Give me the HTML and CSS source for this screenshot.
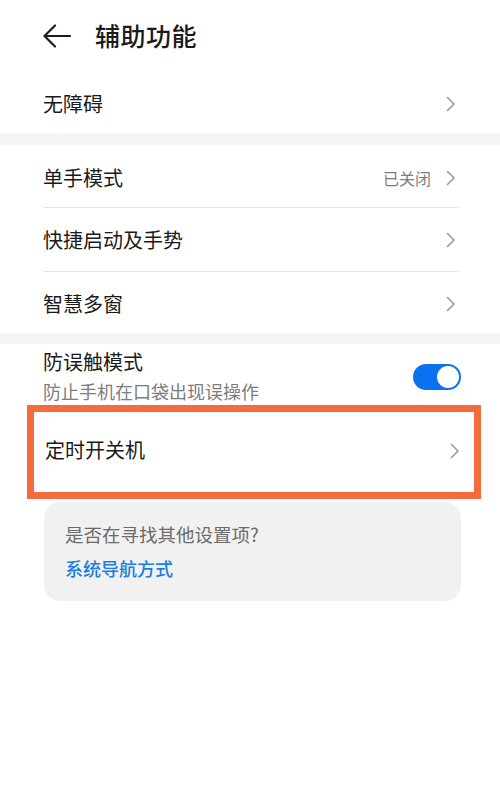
FILE: index.html
```html
<!DOCTYPE html>
<html lang="zh-CN">
<head>
<meta charset="utf-8">
<title>辅助功能</title>
<link rel="stylesheet" href="styles.css">
</head>
<body>
<div class="page">
  <header class="header">
    <svg class="back" width="28" height="24" viewBox="0 0 28 24">
      <path d="M27 12 H2 M12 1.5 L1.5 12 L12 22.5" fill="none" stroke="#1c1c1c" stroke-width="2.2" stroke-linecap="round" stroke-linejoin="round"/>
    </svg>
    <h1 class="title">辅助功能</h1>
  </header>

  <section class="group">
    <div class="row row-a">
      <span class="label">无障碍</span>
      <svg class="chev" width="10" height="16" viewBox="0 0 10 16"><path d="M1.5 1.5 L8 8 L1.5 14.5" fill="none" stroke="#9a9a9a" stroke-width="1.6" stroke-linecap="round" stroke-linejoin="round"/></svg>
    </div>
  </section>

  <div class="band"></div>

  <section class="group">
    <div class="row row-b divided">
      <span class="label">单手模式</span>
      <span class="right"><span class="value">已关闭</span>
      <svg class="chev" width="10" height="16" viewBox="0 0 10 16"><path d="M1.5 1.5 L8 8 L1.5 14.5" fill="none" stroke="#9a9a9a" stroke-width="1.6" stroke-linecap="round" stroke-linejoin="round"/></svg></span>
    </div>
    <div class="row row-c divided">
      <span class="label">快捷启动及手势</span>
      <svg class="chev" width="10" height="16" viewBox="0 0 10 16"><path d="M1.5 1.5 L8 8 L1.5 14.5" fill="none" stroke="#9a9a9a" stroke-width="1.6" stroke-linecap="round" stroke-linejoin="round"/></svg>
    </div>
    <div class="row row-d">
      <span class="label">智慧多窗</span>
      <svg class="chev" width="10" height="16" viewBox="0 0 10 16"><path d="M1.5 1.5 L8 8 L1.5 14.5" fill="none" stroke="#9a9a9a" stroke-width="1.6" stroke-linecap="round" stroke-linejoin="round"/></svg>
    </div>
  </section>

  <div class="band band-b"></div>

  <section class="group">
    <div class="row row-toggle">
      <div class="stack">
        <span class="label">防误触模式</span>
        <span class="sub">防止手机在口袋出现误操作</span>
      </div>
      <span class="toggle"><span class="knob"></span></span>
    </div>
    <div class="row row-timer highlighted">
      <span class="label">定时开关机</span>
      <svg class="chev" width="10" height="16" viewBox="0 0 10 16"><path d="M1.5 1.5 L8 8 L1.5 14.5" fill="none" stroke="#9a9a9a" stroke-width="1.6" stroke-linecap="round" stroke-linejoin="round"/></svg>
    </div>
  </section>

  <div class="card">
    <div class="card-q">是否在寻找其他设置项?</div>
    <div class="card-link">系统导航方式</div>
  </div>
</div>
</body>
</html>
```

FILE: styles.css
```css
* { box-sizing: border-box; }
html, body {
  margin: 0;
  padding: 0;
  background: #ffffff;
}
body {
  font-family: "Noto Sans CJK SC", "Noto Sans", sans-serif;
  color: #1a1a1a;
  width: 500px;
  height: 786px;
  overflow: hidden;
}
.page {
  display: flex;
  flex-direction: column;
}
.header {
  height: 74px;
  display: flex;
  align-items: center;
  padding-left: 43px;
  padding-bottom: 4px;
}
.back {
  display: block;
  margin-top: 1px;
}
.title {
  margin: 0 0 0 24px;
  font-size: 25px;
  font-weight: 500;
  letter-spacing: 0.5px;
  color: #1a1a1a;
  line-height: 1;
}
.group {
  display: flex;
  flex-direction: column;
}
.row {
  display: flex;
  align-items: center;
  justify-content: space-between;
  margin: 0 41px 0 43px;
  position: relative;
}
.row-a { height: 59px; }
.row-b { height: 63px; padding-top: 4px; }
.row-c { height: 64px; }
.row-d { height: 61px; padding-top: 3px; }
.divided { border-bottom: 1px solid #e6e6e6; }
.label {
  font-size: 20px;
  line-height: 1;
  color: #1a1a1a;
}
.right {
  display: flex;
  align-items: center;
  gap: 15px;
}
.value {
  font-size: 16px;
  color: #7d7d7d;
  line-height: 1;
}
.chev {
  display: block;
  margin-right: 3px;
}
.band {
  height: 12px;
  background: #f5f5f5;
}
.band-b { height: 11px; }
.row-toggle {
  height: 61px;
  align-items: center;
}
.stack {
  display: flex;
  flex-direction: column;
  gap: 10px;
  margin-top: 2px;
}
.sub {
  font-size: 18px;
  line-height: 1;
  color: #7d7d7d;
}
.toggle {
  width: 48px;
  height: 26px;
  border-radius: 13px;
  background: #0a72ef;
  position: relative;
  margin-right: -2px;
  margin-top: 5px;
}
.knob {
  position: absolute;
  right: 2px;
  top: 2px;
  width: 22px;
  height: 22px;
  border-radius: 50%;
  background: #ffffff;
}
.row-timer {
  height: 94px;
  margin-left: 45px;
  margin-right: 41px;
  padding-bottom: 4px;
}
.row-timer .chev { margin-right: -1px; margin-top: 2px; }
.highlighted::after {
  content: "";
  position: absolute;
  left: -18px;
  right: -22px;
  top: 0;
  bottom: 0;
  border: 7px solid #f46c3e;
  pointer-events: none;
}
.card {
  margin: 3px 39px 0 44px;
  height: 99px;
  border-radius: 16px;
  background: #f1f1f1;
  padding: 22px 21px 0 21px;
  display: flex;
  flex-direction: column;
  gap: 15px;
}
.card-q {
  font-size: 18.5px;
  line-height: 1.1;
  color: #6b6b6b;
}
.card-link {
  font-size: 18px;
  line-height: 1.1;
  font-weight: 500;
  color: #1a7de2;
}
```
